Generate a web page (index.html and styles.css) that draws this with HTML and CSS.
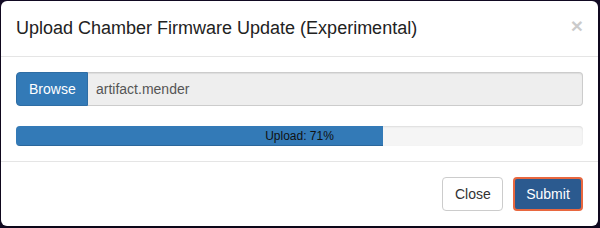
FILE: index.html
```html
<!DOCTYPE html>
<html lang="en">
<head>
    <meta charset="UTF-8">
    <meta name="viewport" content="width=device-width, initial-scale=1.0">
    <title>Upload Firmware</title>
    <link rel="stylesheet" href="styles.css">
</head>
<body>
    <div class="modal">
        <div class="modal-header">
            <h4 class="modal-title">Upload Chamber Firmware Update (Experimental)</h4>
            <button type="button" class="close">&times;</button>
        </div>

        <div class="modal-body">
            <div class="input-group">
                <span class="btn btn-primary browse">Browse</span>
                <input type="text" class="form-control" value="artifact.mender" readonly>
            </div>
            <div class="progress">
                <div class="progress-bar" style="width: 64.7%"></div>
                <span class="progress-label">Upload: 71%</span>
            </div>
        </div>

        <div class="modal-footer">
            <button type="button" class="btn btn-default">Close</button>
            <button type="button" class="btn btn-primary submit">Submit</button>
        </div>
    </div>
</body>
</html>
```

FILE: styles.css
```css
* {
    margin: 0;
    padding: 0;
    box-sizing: border-box;
    font-family: 'Liberation Sans', Arial, sans-serif;
}

body {
    background: #140b27;
    width: 600px;
    height: 228px;
    padding: 1px 2px 2px 1px;
}

.modal {
    background: white;
    border-radius: 6px;
    height: 225px;
    box-shadow: 0 5px 15px rgba(0,0,0,0.5);
    color: #333;
}

.modal-header {
    display: flex;
    justify-content: space-between;
    align-items: center;
    padding: 15px;
    height: 56px;
    border-bottom: 1px solid #e5e5e5;
}

.modal-title {
    font-size: 18px;
    font-weight: normal;
    color: #222;
    line-height: 25px;
}

.close {
    background: none;
    border: none;
    font-size: 21px;
    font-weight: bold;
    color: #000;
    opacity: 0.2;
    line-height: 1;
    margin-top: -6px;
}

.modal-body {
    padding: 15px;
}

.input-group {
    display: flex;
    height: 34px;
    margin-bottom: 20px;
}

.btn {
    display: inline-block;
    font-size: 14px;
    padding: 6px 12px;
    border: 1px solid transparent;
    border-radius: 4px;
    line-height: 20px;
    cursor: pointer;
}

.btn-primary {
    background: #337ab7;
    border-color: #2e6da4;
    color: white;
}

.btn-default {
    background: white;
    border-color: #ccc;
    color: #333;
}

.browse {
    width: 72px;
    border-radius: 4px 0 0 4px;
    text-align: center;
}

.form-control {
    flex-grow: 1;
    background: #eee;
    border: 1px solid #ccc;
    border-left: none;
    border-radius: 0 4px 4px 0;
    padding: 6px 8px;
    font-size: 14px;
    color: #555;
    box-shadow: inset 0 1px 1px rgba(0,0,0,0.075);
}

.progress {
    position: relative;
    height: 20px;
    background: #f5f5f5;
    border-radius: 4px;
    overflow: hidden;
    box-shadow: inset 0 1px 2px rgba(0,0,0,0.1);
}

.progress-bar {
    height: 100%;
    background: #337ab7;
    box-shadow: inset 0 -1px 0 rgba(0,0,0,0.15);
}

.progress-label {
    position: absolute;
    left: 0;
    right: 0;
    top: 0;
    text-align: center;
    font-size: 12px;
    line-height: 20px;
    color: #111;
}

.modal-footer {
    display: flex;
    justify-content: flex-end;
    gap: 10px;
    padding: 15px;
    border-top: 1px solid #e5e5e5;
}

.modal-footer .btn-default {
    width: 61px;
}

.submit {
    width: 70px;
    background: #2b5a8f;
    border: 2px solid #e8673f;
    padding: 5px 11px;
}
```
